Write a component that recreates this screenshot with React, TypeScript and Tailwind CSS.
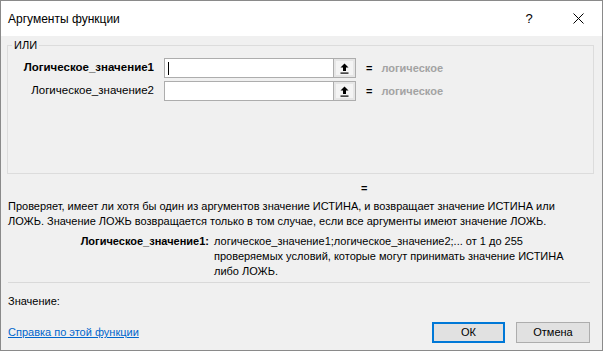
import React from 'react';

const font = { fontFamily: '"Liberation Sans", Arial, sans-serif' };

const RefButton = () => (
    <div className="w-[22px] h-full border-l border-[#adadad] bg-[#e6e6e6] p-[2px]">
        <div className="w-full h-full bg-[#f4f4f4] flex items-center justify-center">
            <svg width="9" height="11" viewBox="0 0 9 11">
                <path d="M4.5 0.5 L8.5 4.5 L6 4.5 L6 8 L3 8 L3 4.5 L0.5 4.5 Z" fill="#000" />
                <rect x="0.5" y="9.5" width="8" height="1.2" fill="#000" />
            </svg>
        </div>
    </div>
);

const ArgRow = ({ label, bold, cursor }: { label: string; bold?: boolean; cursor?: boolean }) => (
    <div className="flex items-center h-[20px]">
        <div className={`w-[146px] text-right text-[11.5px] text-black whitespace-nowrap ${bold ? 'font-bold' : ''}`}>{label}</div>
        <div className="ml-[10px] w-[192px] h-[20px] flex border border-[#adadad] bg-white">
            <div className="flex-1 flex items-center pl-[3px]">
                {cursor && <div className="w-px h-[13px] bg-black"></div>}
            </div>
            <RefButton />
        </div>
        <div className="ml-[10px] text-[11px] font-bold text-black">=</div>
        <div className="ml-[9px] text-[11px] font-bold text-[#a3a3a3]">логическое</div>
    </div>
);

export default function App() {
    return (
        <div style={font} className="w-[603px] h-[351px] flex flex-col border border-[#8a8a8a] bg-[#f0f0f0] text-black">
            {/* Title bar */}
            <div className="h-[35px] bg-white flex items-center shrink-0">
                <div className="pl-[7px] text-[12px] flex-1">Аргументы функции</div>
                <div className="w-[20px] text-[13px] text-center mr-[34px]">?</div>
                <svg width="11" height="11" viewBox="0 0 11 11" className="mr-[18px]">
                    <path d="M0.5 0.5 L10.5 10.5 M10.5 0.5 L0.5 10.5" stroke="#000" strokeWidth="1" />
                </svg>
            </div>

            <div className="flex-1 flex flex-col px-[6px]">
                <fieldset className="mt-[2px] h-[136px] w-[587px] border border-[#dcdcdc] px-[0px]">
                    <legend className="ml-[4px] px-[2px] text-[11px] leading-[14px]">ИЛИ</legend>
                    <div className="mt-[6px] flex flex-col gap-[3px]">
                        <ArgRow label="Логическое_значение1" bold cursor />
                        <ArgRow label="Логическое_значение2" />
                    </div>
                </fieldset>

                <div className="mt-[7px] text-[11px] leading-[15px] pl-[354px] font-bold">=</div>

                <div className="mt-[3px] pl-[1px] text-[11px] leading-[15px]">
                    <div className="whitespace-nowrap">Проверяет, имеет ли хотя бы один из аргументов значение ИСТИНА, и возвращает значение ИСТИНА или</div>
                    <div className="whitespace-nowrap">ЛОЖЬ. Значение ЛОЖЬ возвращается только в том случае, если все аргументы имеют значение ЛОЖЬ.</div>
                </div>

                <div className="mt-[5px] flex text-[11px] leading-[15px]">
                    <div className="w-[202px] text-right font-bold">Логическое_значение1:</div>
                    <div className="ml-[5px]">
                        <div className="whitespace-nowrap">логическое_значение1;логическое_значение2;... от 1 до 255</div>
                        <div className="whitespace-nowrap">проверяемых условий, которые могут принимать значение ИСТИНА</div>
                        <div className="whitespace-nowrap">либо ЛОЖЬ.</div>
                    </div>
                </div>

                <div className="mt-[3px] ml-[1px] mr-[6px] h-px bg-[#d9d9d9]"></div>

                <div className="mt-[11px] pl-[1px] text-[11px] leading-[15px]">Значение:</div>

                <div className="mt-[13px] flex items-center">
                    <a className="pl-[1px] text-[11px] text-[#0066cc] underline flex-1">Справка по этой функции</a>
                    <button className="w-[73px] h-[21px] border-2 border-[#0078d7] bg-[#e1e1e1] text-[11px]">ОК</button>
                    <button className="ml-[11px] mr-[6px] w-[74px] h-[21px] border border-[#adadad] bg-[#e1e1e1] text-[11px]">Отмена</button>
                </div>
            </div>
        </div>
    );
}
